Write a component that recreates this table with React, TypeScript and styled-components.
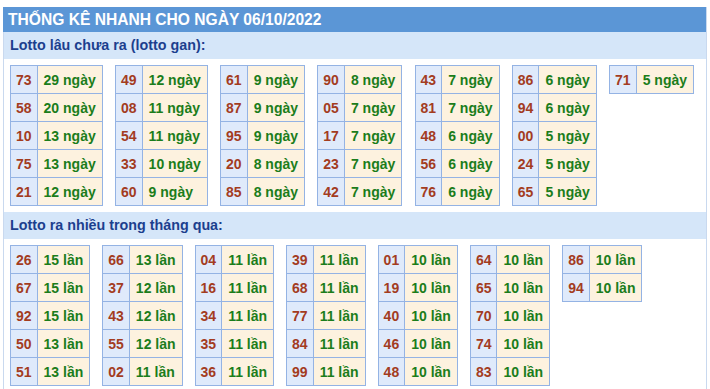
import React from "react";
import styled, { createGlobalStyle } from "styled-components";

const GlobalStyle = createGlobalStyle`
  html, body { margin: 0; padding: 0; background: #ffffff; }
  body { font-family: "Liberation Sans", Arial, sans-serif; }
`;

const Page = styled.div`
  padding: 7px 3px 0 3px;
  width: 710px;
  box-sizing: border-box;
`;

const Panel = styled.div`
  width: 704px;
  box-sizing: border-box;
  border-left: 1px solid #c9d9ef;
  border-right: 1px solid #c9d9ef;
`;

const Header = styled.div`
  height: 25px;
  line-height: 25px;
  background: #5b96d6;
  color: #ffffff;
  font-weight: bold;
  font-size: 15.6px;
  padding-left: 5px;
  margin-left: -1px;
  white-space: nowrap;
`;

const SubHeader = styled.div`
  height: 27px;
  line-height: 27px;
  background: #d5e6f9;
  color: #1c3f8e;
  font-weight: bold;
  font-size: 14.3px;
  padding-left: 6px;
  white-space: nowrap;
`;

const Grid = styled.div<{ $gap: number }>`
  display: flex;
  align-items: flex-start;
  gap: ${(p) => p.$gap}px;
  padding: 6px;
`;

const Table = styled.table`
  border-collapse: collapse;
  font-weight: bold;
  font-size: 14px;
`;

const Num = styled.td`
  height: 27px;
  padding: 0 5px;
  border: 1px solid #94b3e4;
  background: #dfeafb;
  color: #a33c1f;
  text-align: center;
  white-space: nowrap;
`;

const Val = styled.td`
  height: 27px;
  padding: 0 6px;
  border: 1px solid #94b3e4;
  background: #fdf2df;
  color: #1b7d1b;
  white-space: nowrap;
`;

type Pair = [string, string];

const gan: Pair[][] = [
  [["73", "29"], ["58", "20"], ["10", "13"], ["75", "13"], ["21", "12"]],
  [["49", "12"], ["08", "11"], ["54", "11"], ["33", "10"], ["60", "9"]],
  [["61", "9"], ["87", "9"], ["95", "9"], ["20", "8"], ["85", "8"]],
  [["90", "8"], ["05", "7"], ["17", "7"], ["23", "7"], ["42", "7"]],
  [["43", "7"], ["81", "7"], ["48", "6"], ["56", "6"], ["76", "6"]],
  [["86", "6"], ["94", "6"], ["00", "5"], ["24", "5"], ["65", "5"]],
  [["71", "5"]],
];

const nhieu: Pair[][] = [
  [["26", "15"], ["67", "15"], ["92", "15"], ["50", "13"], ["51", "13"]],
  [["66", "13"], ["37", "12"], ["43", "12"], ["55", "12"], ["02", "11"]],
  [["04", "11"], ["16", "11"], ["34", "11"], ["35", "11"], ["36", "11"]],
  [["39", "11"], ["68", "11"], ["77", "11"], ["84", "11"], ["99", "11"]],
  [["01", "10"], ["19", "10"], ["40", "10"], ["46", "10"], ["48", "10"]],
  [["64", "10"], ["65", "10"], ["70", "10"], ["74", "10"], ["83", "10"]],
  [["86", "10"], ["94", "10"]],
];

function StatTable({ rows, unit }: { rows: Pair[]; unit: string }) {
  return (
    <Table>
      <tbody>
        {rows.map(([n, v], i) => (
          <tr key={i}>
            <Num>{n}</Num>
            <Val>
              {v} {unit}
            </Val>
          </tr>
        ))}
      </tbody>
    </Table>
  );
}

export default function App() {
  return (
    <>
      <GlobalStyle />
      <Page>
        <Panel>
          <Header>THỐNG KÊ NHANH CHO NGÀY 06/10/2022</Header>
          <SubHeader>Lotto lâu chưa ra (lotto gan):</SubHeader>
          <Grid $gap={12.3}>
            {gan.map((t, i) => (
              <StatTable key={i} rows={t} unit="ngày" />
            ))}
          </Grid>
          <SubHeader>Lotto ra nhiều trong tháng qua:</SubHeader>
          <Grid $gap={12}>
            {nhieu.map((t, i) => (
              <StatTable key={i} rows={t} unit="lần" />
            ))}
          </Grid>
        </Panel>
      </Page>
    </>
  );
}
